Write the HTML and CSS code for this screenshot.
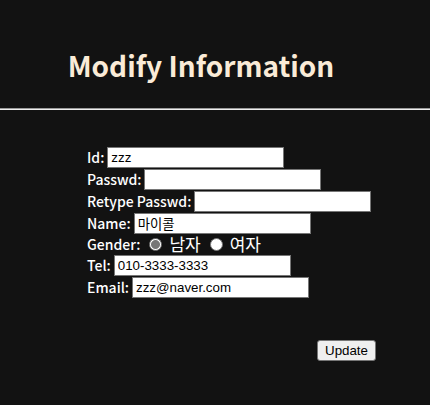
FILE: index.html
```html
<!DOCTYPE html>
<html lang="en">
<head>
<meta charset="utf-8">
<title>Modify Information</title>
<link rel="stylesheet" href="styles.css">
</head>
<body>
<h1 class="title">Modify Information</h1>
<hr class="rule">
<form class="form">
<div class="row"><label for="id">Id:</label><input class="field" id="id" type="text" value="zzz"></div>
<div class="row"><label for="pw">Passwd:</label><input class="field" id="pw" type="password"></div>
<div class="row"><label for="pw2">Retype Passwd:</label><input class="field" id="pw2" type="password"></div>
<div class="row"><label for="name">Name:</label><input class="field" id="name" type="text" value="마이콜"></div>
<div class="row row-gender" role="radiogroup" aria-labelledby="gender"><span id="gender">Gender:</span><input class="radio" id="male" type="radio" name="gender" checked><label class="option" for="male">남자</label><input class="radio" id="female" type="radio" name="gender"><label class="option" for="female">여자</label></div>
<div class="row"><label for="tel">Tel:</label><input class="field" id="tel" type="text" value="010-3333-3333"></div>
<div class="row"><label for="email">Email:</label><input class="field" id="email" type="text" value="zzz@naver.com"></div>
<div class="actions"><button class="update" type="submit">Update</button></div>
</form>
</body>
</html>
```

FILE: styles.css
```css
* { box-sizing: border-box; }
body {
  margin: 0;
  background: #121212;
  color: #fff;
  font: 500 14px/20px "Noto Sans CJK KR", sans-serif;
  font-feature-settings: "calt" 0, "ccmp" 0, "locl" 0;
}
.title {
  margin: 0;
  padding: 43px 28px 21px 0;
  color: #faebd7;
  text-align: center;
  font-size: 28px;
  line-height: 44px;
  font-weight: 700;
}
.rule {
  margin: 0;
  border: 0;
  border-top: 1px solid #9a9a9a;
  border-bottom: 1px solid #eee;
}
.form { padding: 36px 54px 0 87px; }
.row {
  display: flex;
  align-items: center;
  gap: 3px;
  height: 22px;
  white-space: nowrap;
}
.row-gender { height: 20px; }
.field {
  width: 177px;
  height: 21px;
  padding: 1px 3px;
  border: 1px solid #767676;
  border-radius: 0;
  background: #fff;
  color: #000;
  font-family: "Liberation Sans", "Noto Sans CJK KR", sans-serif;
}
.radio {
  appearance: none;
  width: 13px;
  height: 13px;
  margin: 0 4px 0 6px;
  border: 1px solid #767676;
  border-radius: 50%;
  background: #fff;
}
.radio:checked { background: radial-gradient(circle, #767676 4px, #fff 5px); }
.option {
  font-size: 17px;
  font-weight: 400;
}
.update {
  width: 59px;
  height: 21px;
  padding: 0;
  border: 1px solid #767676;
  border-radius: 3px;
  background: #efefef;
  color: #000;
  font-family: "Liberation Sans", sans-serif;
}
.actions { display: flex; justify-content: flex-end; margin-top: 42px; }
```
